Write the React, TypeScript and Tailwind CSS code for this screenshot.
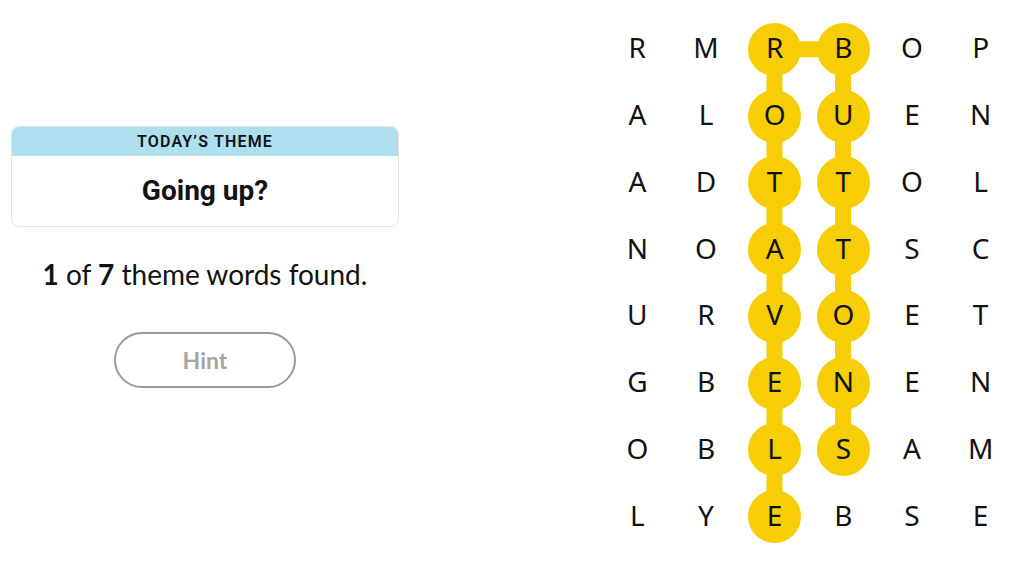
const rows = [
  "RMRBOP",
  "ALOUEN",
  "ADTTOL",
  "NOATSC",
  "URVOET",
  "GBENEN",
  "OBLSAM",
  "LYEBSE",
];

// cells that belong to the found spangram
const found = new Set<string>([
  ...[0, 1, 2, 3, 4, 5, 6, 7].map((r) => `${r}-2`),
  ...[0, 1, 2, 3, 4, 5, 6].map((r) => `${r}-3`),
]);

const CW = 68.6;
const RH = 66.7;
const cx = (c: number) => c * CW + CW / 2;
const cy = (r: number) => r * RH + RH / 2;

function Board() {
  return (
    <div className="relative h-[534px] w-[412px]">
      <svg className="absolute inset-0" width={412} height={534}>
        <g stroke="#f7cd06" strokeWidth={16}>
          <line x1={cx(2)} y1={cy(0)} x2={cx(2)} y2={cy(7)} />
          <line x1={cx(3)} y1={cy(0)} x2={cx(3)} y2={cy(6)} />
          <line x1={cx(2)} y1={cy(0)} x2={cx(3)} y2={cy(0)} />
        </g>
      </svg>
      <div className="relative grid h-full grid-cols-6 grid-rows-8">
        {rows.map((row, r) =>
          row.split("").map((ch, c) => (
            <div key={`${r}-${c}`} className="flex items-center justify-center">
              <span
                className={`flex h-[53px] w-[53px] items-center justify-center rounded-full pb-[4px] text-[28px] leading-none text-[#121212] ${
                  found.has(`${r}-${c}`) ? "bg-[#f7cd06]" : ""
                }`}
              >
                {ch}
              </span>
            </div>
          ))
        )}
      </div>
    </div>
  );
}

export default function App() {
  return (
    <div className="flex h-[576px] w-[1024px] bg-white font-['Noto_Sans',sans-serif]">
      <div className="flex w-[410px] flex-col items-center px-[11px] pt-[126px]">
        <div className="w-full overflow-hidden rounded-lg border border-[#e4e4e4]">
          <div className="flex h-[29px] items-center justify-center bg-[#aedfee] font-['Roboto',sans-serif] text-[16px] font-semibold tracking-[1.2px] text-[#121212]">
            TODAY’S THEME
          </div>
          <div className="flex h-[70px] items-center justify-center font-['Roboto',sans-serif] text-[28px] font-bold text-[#121212]">
            Going up?
          </div>
        </div>
        <p className="mt-[30px] font-['Lato',sans-serif] text-[28px] leading-[34px] text-[#121212]">
          <b>1</b> of <b>7</b> theme words found.
        </p>
        <button className="mt-[41px] h-[56px] w-[182px] rounded-full border-2 border-[#9a9a9a] font-['Lato',sans-serif] text-[23px] font-bold text-[#a5a5a5]">
          Hint
        </button>
      </div>
      <div className="ml-[193px] pt-[16px]">
        <Board />
      </div>
    </div>
  );
}
